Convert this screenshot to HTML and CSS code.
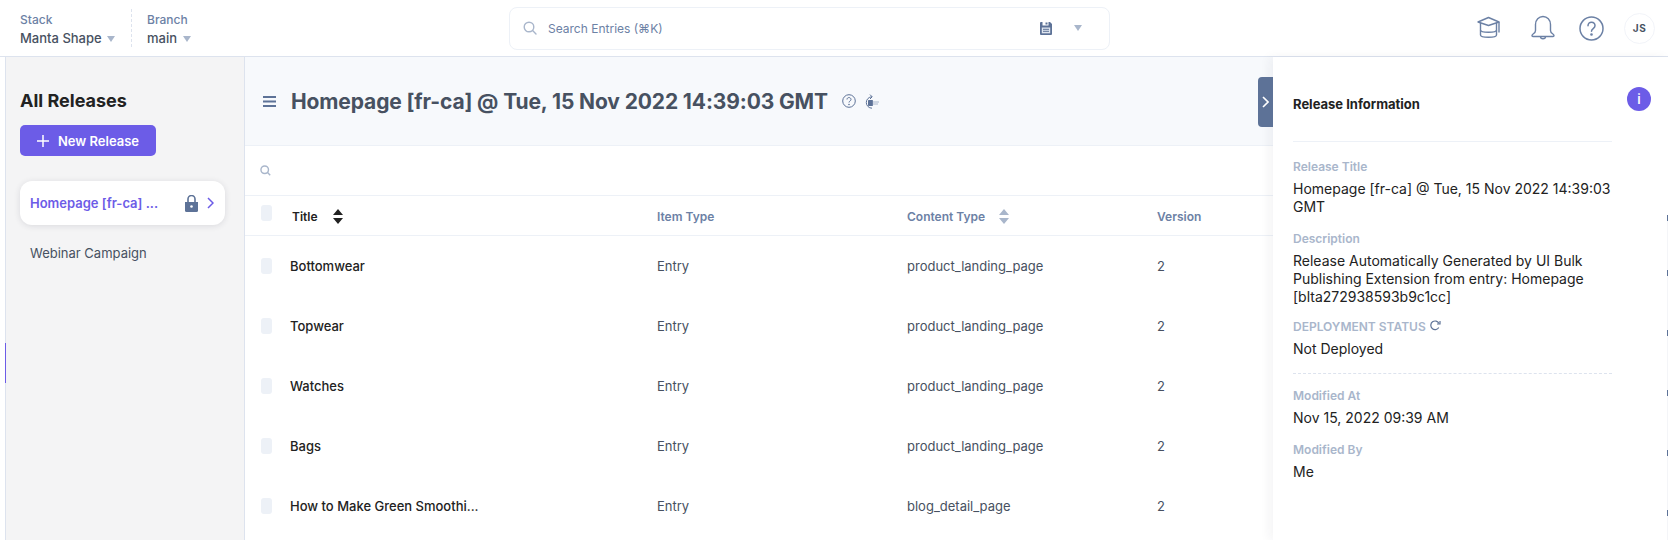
FILE: index.html
```html
<!DOCTYPE html>
<html lang="en">
<head>
  <meta charset="UTF-8" />
  <title>Releases</title>
  <link rel="stylesheet" href="styles.css">
</head>
<body>
  <header class="topbar">
    <div class="switcher">
      <span class="switcher-label">Stack</span>
      <span class="switcher-value">Manta Shape <i class="caret"></i></span>
    </div>
    <div class="switcher switcher-branch">
      <span class="switcher-label">Branch</span>
      <span class="switcher-value">main <i class="caret"></i></span>
    </div>
    <div class="search">
      <svg class="search-icon" width="14" height="14" viewBox="0 0 14 14" fill="none" stroke="#a9b6cb" stroke-width="1.4"><circle cx="6" cy="6" r="4.8"/><path d="M9.6 9.6 13 13" stroke-linecap="round"/></svg>
      <span class="search-text">Search Entries (⌘K)</span>
      <svg class="search-save" width="12" height="13" viewBox="0 0 12 13"><path d="M0 1a1 1 0 0 1 1-1h1.500v3.500h6V0H10l2 2v10a1 1 0 0 1-1 1H1a1 1 0 0 1-1-1z" fill="#5d7297"/><path d="M5.500 .5h2v2h-2z" fill="#5d7297"/><path d="M1.800 5.500h8.400v5.800H1.800z" fill="#dfe5ef"/><path d="M3 7.300h6M3 9.300h6" stroke="#5d7297"/></svg>
      <i class="caret search-caret"></i>
    </div>
    <div class="top-icons">
      <svg width="26" height="24" viewBox="0 0 26 24" fill="none" stroke="#6c81a5" stroke-width="1.4" stroke-linejoin="round"><path d="M2 6 12.500 1.500 23 6l-10.500 3.500z"/><path d="M4.500 7v12c0 3 16 3 16 0V7"/><path d="M4.500 14c0 3 16 3 16 0"/><path d="M23 6v10.500"/></svg>
      <svg class="icon-bell" width="26" height="26" viewBox="0 0 26 26" fill="none" stroke="#6c81a5" stroke-width="1.4" stroke-linejoin="round"><path d="M2 20.500c0-1.800 3.500-1.800 3.500-5V9.500c0-4.500 3.300-8 7.500-8s7.500 3.500 7.500 8v6c0 3.200 3.500 3.200 3.500 5 0 .7-.4 1-1 1H3c-.6 0-1-.3-1-1z"/><path d="M10.500 21.500c0 3 5 3 5 0"/></svg>
      <svg class="icon-help" width="25" height="25" viewBox="0 0 25 25" fill="none" stroke="#6c81a5" stroke-width="1.5"><circle cx="12.500" cy="12.500" r="11.500"/><path d="M9 9.800c0-5 7-4.500 7 0 0 2.800-3.500 2.800-3.500 5.500" stroke-linecap="round"/><circle cx="12.500" cy="18.500" r=".6" fill="#6c81a5"/></svg>
      <span class="avatar">JS</span>
    </div>
  </header>

  <div class="page">
    <aside class="sidebar">
      <h2>All Releases</h2>
      <button class="new-btn">
        <svg width="12" height="12" viewBox="0 0 12 12" stroke="#fff" stroke-width="1.5"><path d="M6 0v12M0 6h12"/></svg>
        New Release
      </button>
      <div class="release release-active">
        <span class="release-name">Homepage [fr-ca] ...</span>
        <svg width="13" height="17" viewBox="0 0 13 17" fill="#5d7297"><path d="M0 7h13v8.500a1.500 1.500 0 0 1-1.500 1.500h-10A1.500 1.500 0 0 1 0 15.500z"/><path d="M3 7V4a3.500 3.500 0 0 1 7 0v3" fill="none" stroke="#5d7297" stroke-width="1.600"/><circle cx="6.500" cy="11.500" r="1.300" fill="#fff"/></svg>
        <svg class="release-arrow" width="7" height="12" viewBox="0 0 7 12" fill="none" stroke="#6c5ce7" stroke-width="1.500"><path d="m1 1 5 5-5 5"/></svg>
      </div>
      <div class="release">Webinar Campaign</div>
      <i class="side-tick"></i>
    </aside>

    <main class="main">
      <section class="hero">
        <svg width="13" height="13" viewBox="0 0 13 13" stroke="#5d7297" stroke-width="2"><path d="M0 2h13M0 6.500h13M0 11h13"/></svg>
        <h1>Homepage [fr-ca] @ Tue, 15 Nov 2022 14:39:03 GMT</h1>
        <svg class="hero-help" width="14" height="14" viewBox="0 0 14 14" fill="none" stroke="#5d7297"><circle cx="7" cy="7" r="6.300"/><path d="M5 5.500c0-2.700 4-2.500 4 0 0 1.500-2 1.500-2 3"/><circle cx="7" cy="10.500" r=".4"/></svg>
        <svg class="hero-deploy" width="14" height="15" viewBox="0 0 14 15" fill="none" stroke="#5d7297"><path d="M7 2.800a5.700 5.700 0 1 0 0 11.400"/><path d="m5 .6 2.200 2.200L5 5"/><path d="M3.500 6.500h4v5h-4z" fill="#5d7297"/><path d="M7.500 8H14M7.500 10H13" stroke="#a9b6cb"/></svg>
      </section>
      <div class="table-search">
        <svg width="11" height="11" viewBox="0 0 14 14" fill="none" stroke="#a9b6cb" stroke-width="1.800"><circle cx="6" cy="6" r="4.800"/><path d="M9.600 9.600 13 13"/></svg>
      </div>
      <div class="row row-head">
        <i class="check"></i>
        <span class="head-title">Title
          <svg width="10" height="15" viewBox="0 0 10 15" fill="#222"><path d="M5 0l5 6H0zM5 15l-5-6h10z"/></svg>
        </span>
        <span>Item Type</span>
        <span>Content Type
          <svg class="sort-muted" width="10" height="15" viewBox="0 0 10 15" fill="#a9b6cb"><path d="M5 0l5 6H0zM5 15l-5-6h10z"/></svg>
        </span>
        <span>Version</span>
      </div>
      <div class="row"><i class="check"></i><span class="row-title">Bottomwear</span><span>Entry</span><span>product_landing_page</span><span>2</span></div>
      <div class="row"><i class="check"></i><span class="row-title">Topwear</span><span>Entry</span><span>product_landing_page</span><span>2</span></div>
      <div class="row"><i class="check"></i><span class="row-title">Watches</span><span>Entry</span><span>product_landing_page</span><span>2</span></div>
      <div class="row"><i class="check"></i><span class="row-title">Bags</span><span>Entry</span><span>product_landing_page</span><span>2</span></div>
      <div class="row"><i class="check"></i><span class="row-title">How to Make Green Smoothi...</span><span>Entry</span><span>blog_detail_page</span><span>2</span></div>

      <aside class="panel">
        <button class="panel-toggle">
          <svg width="7" height="12" viewBox="0 0 7 12" fill="none" stroke="#fff" stroke-width="1.600"><path d="m1 1 5 5-5 5"/></svg>
        </button>
        <div class="panel-body">
          <h3>Release Information</h3>
          <hr class="panel-line">
          <div class="field">
            <label>Release Title</label>
            <p>Homepage [fr-ca] @ Tue, 15 Nov 2022 14:39:03 GMT</p>
          </div>
          <div class="field field-tight">
            <label>Description</label>
            <p>Release Automatically Generated by UI Bulk Publishing Extension from entry: Homepage [blta272938593b9c1cc]</p>
          </div>
          <div class="field">
            <label class="label-caps">DEPLOYMENT STATUS
              <svg width="12" height="11" viewBox="0 0 12 11" fill="none" stroke="#5d7297" stroke-width="1.200"><path d="M10 3.500A4.300 4.300 0 1 0 9.800 7.500"/><path d="M11 1v3H8"/></svg>
            </label>
            <p>Not Deployed</p>
          </div>
          <hr class="panel-dash">
          <div class="field">
            <label>Modified At</label>
            <p>Nov 15, 2022 09:39 AM</p>
          </div>
          <div class="field">
            <label>Modified By</label>
            <p>Me</p>
          </div>
        </div>
        <span class="info-dot">i</span>
        <div class="edge-ticks"><i></i><i></i><i></i><i></i><i></i><i></i></div>
      </aside>
    </main>
  </div>
</body>
</html>
```

FILE: styles.css
```css
* { box-sizing: border-box; }
body { margin: 0; height: 540px; overflow: hidden; background: #fff; font-family: Inter, "Noto Sans", sans-serif; color: #222; font-size: 13px; }
h1, h2, h3, p { margin: 0; }

.topbar { height: 57px; display: flex; align-items: center; border-bottom: 1px solid #dde3ee; padding-left: 20px; }
.switcher { width: 111px; height: 38px; display: flex; flex-direction: column; gap: 2px; padding-top: 3px; font-size: 12px; }
.switcher-branch { width: 378px; border-left: 1px dashed #dde3ee; padding-left: 15px; }
.switcher-label { color: #6c81a5; font-weight: 500; line-height: 15px; }
.switcher-value { color: #475161; font-size: 13px; font-weight: 500; line-height: 18px; }
.caret { display: inline-block; width: 0; height: 0; margin-left: 2px; border: 4px solid transparent; border-top: 6px solid #a9b6cb; border-bottom: 0; vertical-align: 1px; }

.search { width: 601px; height: 43px; display: flex; align-items: center; padding: 0 27px 0 13px; border: 1px solid #edf1f7; border-radius: 8px; }
.search-text { flex: 1; margin-left: 11px; color: #6c81a5; font-size: 12px; }
.search-caret { margin-left: 22px; }

.top-icons { display: flex; align-items: center; margin-left: auto; margin-right: 13px; }
.icon-bell { margin-left: 28px; }
.icon-help { margin-left: 23px; }
.avatar { width: 31px; height: 31px; margin-left: 20px; display: flex; align-items: center; justify-content: center; border: 1px solid #f2f4f9; border-radius: 50%; color: #475161; font-size: 10px; font-weight: 700; letter-spacing: 0.5px; }

.page { display: flex; height: 483px; padding-left: 5px; }
.sidebar { position: relative; width: 240px; flex: none; padding: 34px 4px 0 14px; background: #f4f4f5; border-left: 1px solid #dde3ee; border-right: 1px solid #dde3ee; }
.sidebar h2 { font-size: 18px; line-height: 20px; font-weight: 700; color: #222; }
.new-btn { height: 31px; width: 136px; margin-top: 14px; display: flex; align-items: center; justify-content: center; gap: 9px; border: 0; border-radius: 5px; background: #6c5ce7; color: #fff; font-family: inherit; font-size: 13px; font-weight: 600; }
.release { display: flex; align-items: center; height: 44px; padding: 0 10px; font-size: 13px; color: #475161; }
.release-active { margin-top: 25px; margin-bottom: 6px; width: 205px; padding-right: 11px; background: #fff; border-radius: 12px; box-shadow: 0 1px 6px rgba(34, 34, 60, 0.12); }
.release-name { flex: 1; color: #6c5ce7; font-weight: 600; }
.release-arrow { margin-left: 9px; }
.side-tick { position: absolute; left: -1px; top: 286px; width: 1px; height: 40px; background: #6c5ce7; }

.main { position: relative; flex: 1; min-width: 0; }
.hero { height: 89px; display: flex; align-items: center; padding: 0 0 0 18px; background: #f7f9fc; border-bottom: 1px solid #edf1f7; }
.hero h1 { margin-left: 15px; font-size: 21px; font-weight: 700; color: #475161; letter-spacing: -0.12px; }
.hero-help { margin-left: 14px; }
.hero-deploy { margin-left: 9px; }
.table-search { height: 50px; display: flex; align-items: center; padding-left: 15px; border-bottom: 1px solid #edf1f7; }

.row { display: grid; grid-template-columns: 29px 367px 250px 250px 1fr; height: 60px; align-items: center; padding-left: 16px; color: #475161; }
.row-head { height: 40px; padding-top: 2px; font-size: 12px; font-weight: 600; color: #6c81a5; border-bottom: 1px solid #edf1f7; }
.row-head .check { margin-bottom: 8px; }
.row-title { color: #222; font-weight: 500; }
.head-title { display: flex; align-items: center; gap: 15px; padding-left: 2px; color: #222; font-weight: 600; }
.sort-muted { margin-left: 11px; vertical-align: -3px; }
.check { width: 11px; height: 16px; border-radius: 3px; background: #edf1f7; }

.panel { position: absolute; top: 0; right: 0; bottom: 0; width: 395px; display: flex; padding: 0 0 0 20px; background: #fff; box-shadow: -4px 0 10px rgba(34, 34, 60, 0.05); }
.panel-toggle { position: absolute; left: -15px; top: 20px; width: 15px; height: 50px; padding: 0; display: flex; align-items: center; justify-content: center; border: 0; border-radius: 4px 0 0 4px; background: #5d7297; }
.panel-body { width: 319px; padding-top: 37px; }
.panel h3 { font-size: 13px; font-weight: 700; line-height: 20px; color: #222; }
.panel-line { margin: 27px 0 17px; border: 0; border-top: 1px solid #edf1f7; }
.panel-dash { margin: 15px 0 14px; border: 0; border-top: 1px dashed #dde3ee; }
.field { margin-bottom: 15px; }
.field-tight { margin-bottom: 13px; }
.field label { display: block; margin-bottom: 6px; color: #a9b6cb; font-size: 12px; font-weight: 600; line-height: 15px; }
.field p { font-size: 14px; line-height: 18px; color: #222; }
.info-dot { position: absolute; left: 354px; top: 30px; width: 24px; height: 24px; display: flex; align-items: center; justify-content: center; border-radius: 50%; background: #6c5ce7; color: #fff; font-size: 13px; font-weight: 600; }
.edge-ticks { position: absolute; top: 158px; right: 0; bottom: 0; width: 1px; display: flex; flex-direction: column; gap: 54px; background: #f4f5f8; }
.edge-ticks i { height: 6px; background: #5d7297; }
.edge-ticks i:first-child { margin-bottom: -5px; }
```
